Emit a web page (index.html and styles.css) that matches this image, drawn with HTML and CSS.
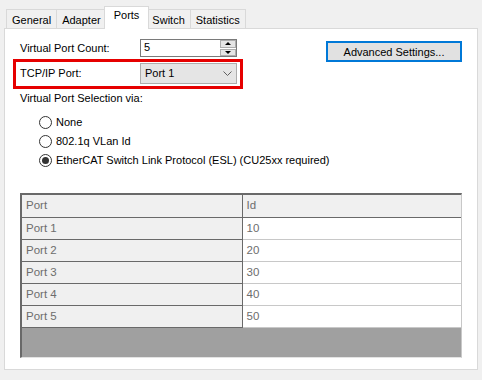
FILE: index.html
```html
<!DOCTYPE html>
<html>
  <head>
    <link rel="stylesheet" href="styles.css">
  </head>
  <body>
    <nav class="tabs">
      <div class="tab">General</div>
      <div class="tab">Adapter</div>
      <div class="tab active">Ports</div>
      <div class="tab">Switch</div>
      <div class="tab">Statistics</div>
    </nav>
    <section class="panel">
      <div class="top">
        <div class="fields">
          <div class="field">
            <label>Virtual Port Count:</label>
            <div class="spinner">
              <span class="spin-value">5</span>
              <span class="spin-buttons">
                <span class="spin-up"></span>
                <span class="spin-down"></span>
              </span>
            </div>
          </div>
          <div class="field highlight">
            <label>TCP/IP Port:</label>
            <div class="combo">
              <span>Port 1</span>
              <svg class="chevron" viewBox="0 0 9 5">
                <polyline points="0.5,0.5 4.5,4.5 8.5,0.5"/>
              </svg>
            </div>
          </div>
        </div>
        <button class="btn">Advanced Settings...</button>
      </div>

      <p class="caption">Virtual Port Selection via:</p>
      <ul class="radios">
        <li><span class="radio"></span>None</li>
        <li><span class="radio"></span>802.1q VLan Id</li>
        <li><span class="radio checked"></span>EtherCAT Switch Link Protocol (ESL) (CU25xx required)</li>
      </ul>

      <div class="grid">
        <table>
          <tr><th>Port</th><th>Id</th></tr>
          <tr><th>Port 1</th><td>10</td></tr>
          <tr><th>Port 2</th><td>20</td></tr>
          <tr><th>Port 3</th><td>30</td></tr>
          <tr><th>Port 4</th><td>40</td></tr>
          <tr><th>Port 5</th><td>50</td></tr>
        </table>
      </div>
    </section>
  </body>
</html>
```

FILE: styles.css
```css
:root {
  --window-color: #f0f0f0;
  --tab-border: #d9d9d9;
  --control-border: #adadad;
  --control-face: #e5e5e5;
  --focus-color: #0078d7;
  --mark-color: #e60000;
  --grid-dark: #696969;
  --grid-light: #c8c8c8;
  --grid-text: #6d6d6d;
  --grid-empty: #a0a0a0;
}

html, body {
  margin: 0;
  padding: 0;
}

body {
  background-color: var(--window-color);
  font-family: "Segoe UI", "Liberation Sans", Arial, sans-serif;
  font-size: 11px;
  line-height: 15px;
  color: #000;
  width: 482px;
  height: 380px;
  overflow: hidden;
}

.tabs {
  display: flex;
  align-items: flex-end;
  height: 28px;
  padding-left: 7px;
  box-sizing: border-box;
}

.tab {
  height: 19px;
  line-height: 18px;
  padding: 1px 5px 0 5px;
  border: 1px solid var(--tab-border);
  border-bottom: none;
  margin-left: -1px;
  box-sizing: border-box;
}

.tab.active {
  height: 23px;
  line-height: 16px;
  padding: 0 9px;
  margin: 0 -2px -1px -3px;
  background: #fff;
  position: relative;
  z-index: 1;
}

.panel {
  margin: 0 4px;
  background: #fff;
  border: 1px solid var(--tab-border);
  padding: 10px 15px 11px 15px;
}

.top {
  display: flex;
  justify-content: space-between;
  align-items: flex-start;
}

.field {
  display: flex;
  align-items: center;
}

.field label {
  width: 120px;
}

.spinner {
  width: 97px;
  height: 18px;
  box-sizing: border-box;
  border: 1px solid #7a7a7a;
  display: flex;
}

.spin-value {
  flex: 1;
  padding-left: 3px;
  line-height: 15px;
}

.spin-buttons {
  width: 16px;
  display: flex;
  flex-direction: column;
  gap: 1px;
  padding-left: 1px;
}

.spin-up, .spin-down {
  flex: 1;
  background: var(--control-face);
  border: 1px solid var(--control-border);
  display: flex;
  align-items: center;
  justify-content: center;
}

.spin-up:after, .spin-down:after {
  content: '';
  border-left: 3px solid transparent;
  border-right: 3px solid transparent;
}

.spin-up:after {
  border-bottom: 3px solid #000;
}

.spin-down:after {
  border-top: 3px solid #000;
}

.highlight {
  margin: 2px 0 0 -7px;
  border: 3px solid var(--mark-color);
  padding: 1px 3px 2px 4px;
}

.combo {
  width: 97px;
  height: 21px;
  box-sizing: border-box;
  background: var(--control-face);
  border: 1px solid var(--control-border);
  display: flex;
  align-items: center;
  justify-content: space-between;
  padding: 0 4px;
}

.chevron {
  width: 9px;
  height: 5px;
  fill: none;
  stroke: #606060;
  stroke-width: 1;
}

.btn {
  margin-top: 2px;
  width: 136px;
  height: 21px;
  background: #e1e1e1;
  border: 2px solid var(--focus-color);
  font-family: inherit;
  font-size: 11px;
  color: #000;
  padding: 0;
}

.caption {
  margin: 2px 0 0 0;
}

.radios {
  list-style: none;
  margin: 7px 0 0 19px;
  padding: 0;
}

.radios li {
  display: flex;
  align-items: center;
  height: 19px;
}

.radio {
  width: 13px;
  height: 13px;
  box-sizing: border-box;
  border: 1px solid #333;
  border-radius: 50%;
  margin-right: 4px;
  display: flex;
  align-items: center;
  justify-content: center;
}

.radio.checked:after {
  content: '';
  width: 7px;
  height: 7px;
  border-radius: 50%;
  background: #333;
}

.grid {
  margin-top: 23px;
  height: 165px;
  box-sizing: border-box;
  background: var(--grid-empty);
  border-left: 2px solid var(--grid-dark);
  border-top: 2px solid var(--grid-dark);
  border-right: 1px solid var(--grid-light);
  border-bottom: 1px solid #e3e3e3;
}

.grid table {
  width: 100%;
  border-collapse: collapse;
  color: var(--grid-text);
  font-size: 11.5px;
}

.grid th, .grid td {
  height: 22px;
  padding: 0 0 0 4px;
  text-align: left;
  font-weight: normal;
  box-sizing: border-box;
}

.grid th {
  width: 220px;
  background: var(--window-color);
  border: 1px solid var(--grid-dark);
  border-top: none;
  border-left: none;
}

.grid td {
  background: #fff;
  border-bottom: 1px solid var(--grid-light);
}

.grid tr:first-child th:last-child {
  width: auto;
  border-right: none;
}
```
